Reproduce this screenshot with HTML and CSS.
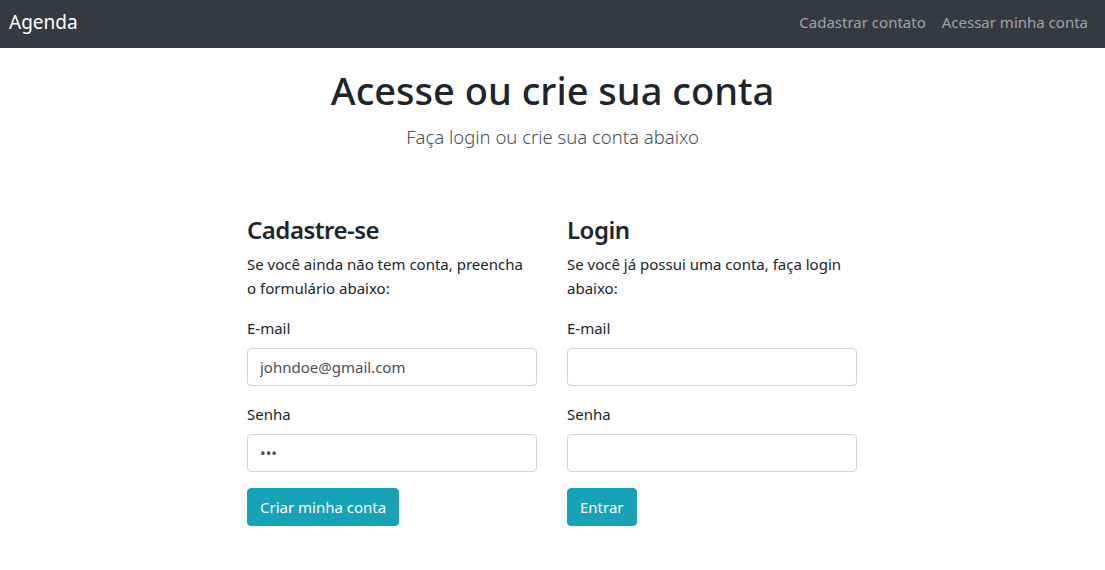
FILE: index.html
```html
<!DOCTYPE html>
<html lang="pt-BR">
<head>
<meta charset="utf-8">
<title>Agenda</title>
<link rel="stylesheet" href="styles.css">
</head>
<body>
<nav class="navbar">
  <a class="brand" href="#">Agenda</a>
  <div class="nav-links">
    <a class="nav-link" href="#">Cadastrar contato</a>
    <a class="nav-link" href="#">Acessar minha conta</a>
  </div>
</nav>
<main class="container">
  <h1 class="title">Acesse ou crie sua conta</h1>
  <p class="lead">Faça login ou crie sua conta abaixo</p>
  <div class="row">
    <section class="col">
      <h3 class="col-title">Cadastre-se</h3>
      <p class="desc">Se você ainda não tem conta, preencha<br>o formulário abaixo:</p>
      <div class="form-group">
        <label class="label">E-mail</label>
        <input class="input" type="text" value="johndoe@gmail.com">
      </div>
      <div class="form-group">
        <label class="label">Senha</label>
        <input class="input" type="password" value="abc">
      </div>
      <button class="btn">Criar minha conta</button>
    </section>
    <section class="col">
      <h3 class="col-title">Login</h3>
      <p class="desc">Se você já possui uma conta, faça login<br>abaixo:</p>
      <div class="form-group">
        <label class="label">E-mail</label>
        <input class="input" type="text">
      </div>
      <div class="form-group">
        <label class="label">Senha</label>
        <input class="input" type="password">
      </div>
      <button class="btn">Entrar</button>
    </section>
  </div>
</main>
</body>
</html>
```
FILE: styles.css
```css
* { box-sizing: border-box; }
html, body { margin: 0; padding: 0; }
body {
  font-family: "Noto Sans", "Open Sans", Arial, sans-serif;
  font-size: 15px;
  line-height: 24px;
  color: #212529;
  background: #fff;
}
.navbar {
  height: 48px;
  background: #343a40;
  display: flex;
  align-items: center;
  justify-content: space-between;
  padding: 0 9px 5px 9px;
}
.brand {
  color: #fff;
  text-decoration: none;
  font-size: 19px;
  line-height: 30px;
}
.nav-links { display: flex; }
.nav-link {
  color: rgba(255,255,255,0.55);
  text-decoration: none;
  font-size: 15px;
  padding: 0 8px;
}
.container {
  display: flex;
  flex-direction: column;
  align-items: center;
}
.title {
  margin: 18px 0 8px;
  font-size: 38px;
  line-height: 48px;
  font-weight: 500;
}
.lead {
  margin: 0;
  font-size: 18.5px;
  line-height: 30px;
  font-weight: 300;
  color: #495057;
}
.row {
  display: flex;
  justify-content: center;
  margin: 62px 1px 0 0;
}
.col {
  width: 320px;
  padding: 0 15px;
}
.col-title {
  margin: 0 0 6px;
  font-size: 24px;
  letter-spacing: -0.5px;
  line-height: 32px;
  font-weight: 600;
}
.desc { margin: 0 0 16px; font-size: 15px; }
.form-group { margin-bottom: 16px; display: flex; flex-direction: column; }
.label { display: block; margin-bottom: 8px; font-size: 15px; line-height: 24px; }
.input {
  display: block;
  width: 100%;
  height: 38px;
  padding: 6px 12px;
  font-family: inherit;
  font-size: 15px;
  color: #495057;
  border: 1px solid #ced4da;
  border-radius: 4px;
  background: #fff;
}
.btn {
  height: 38px;
  padding: 6px 12px;
  font-family: inherit;
  font-size: 15px;
  color: #fff;
  background: #17a2b8;
  border: 1px solid #17a2b8;
  border-radius: 4px;
}
```
